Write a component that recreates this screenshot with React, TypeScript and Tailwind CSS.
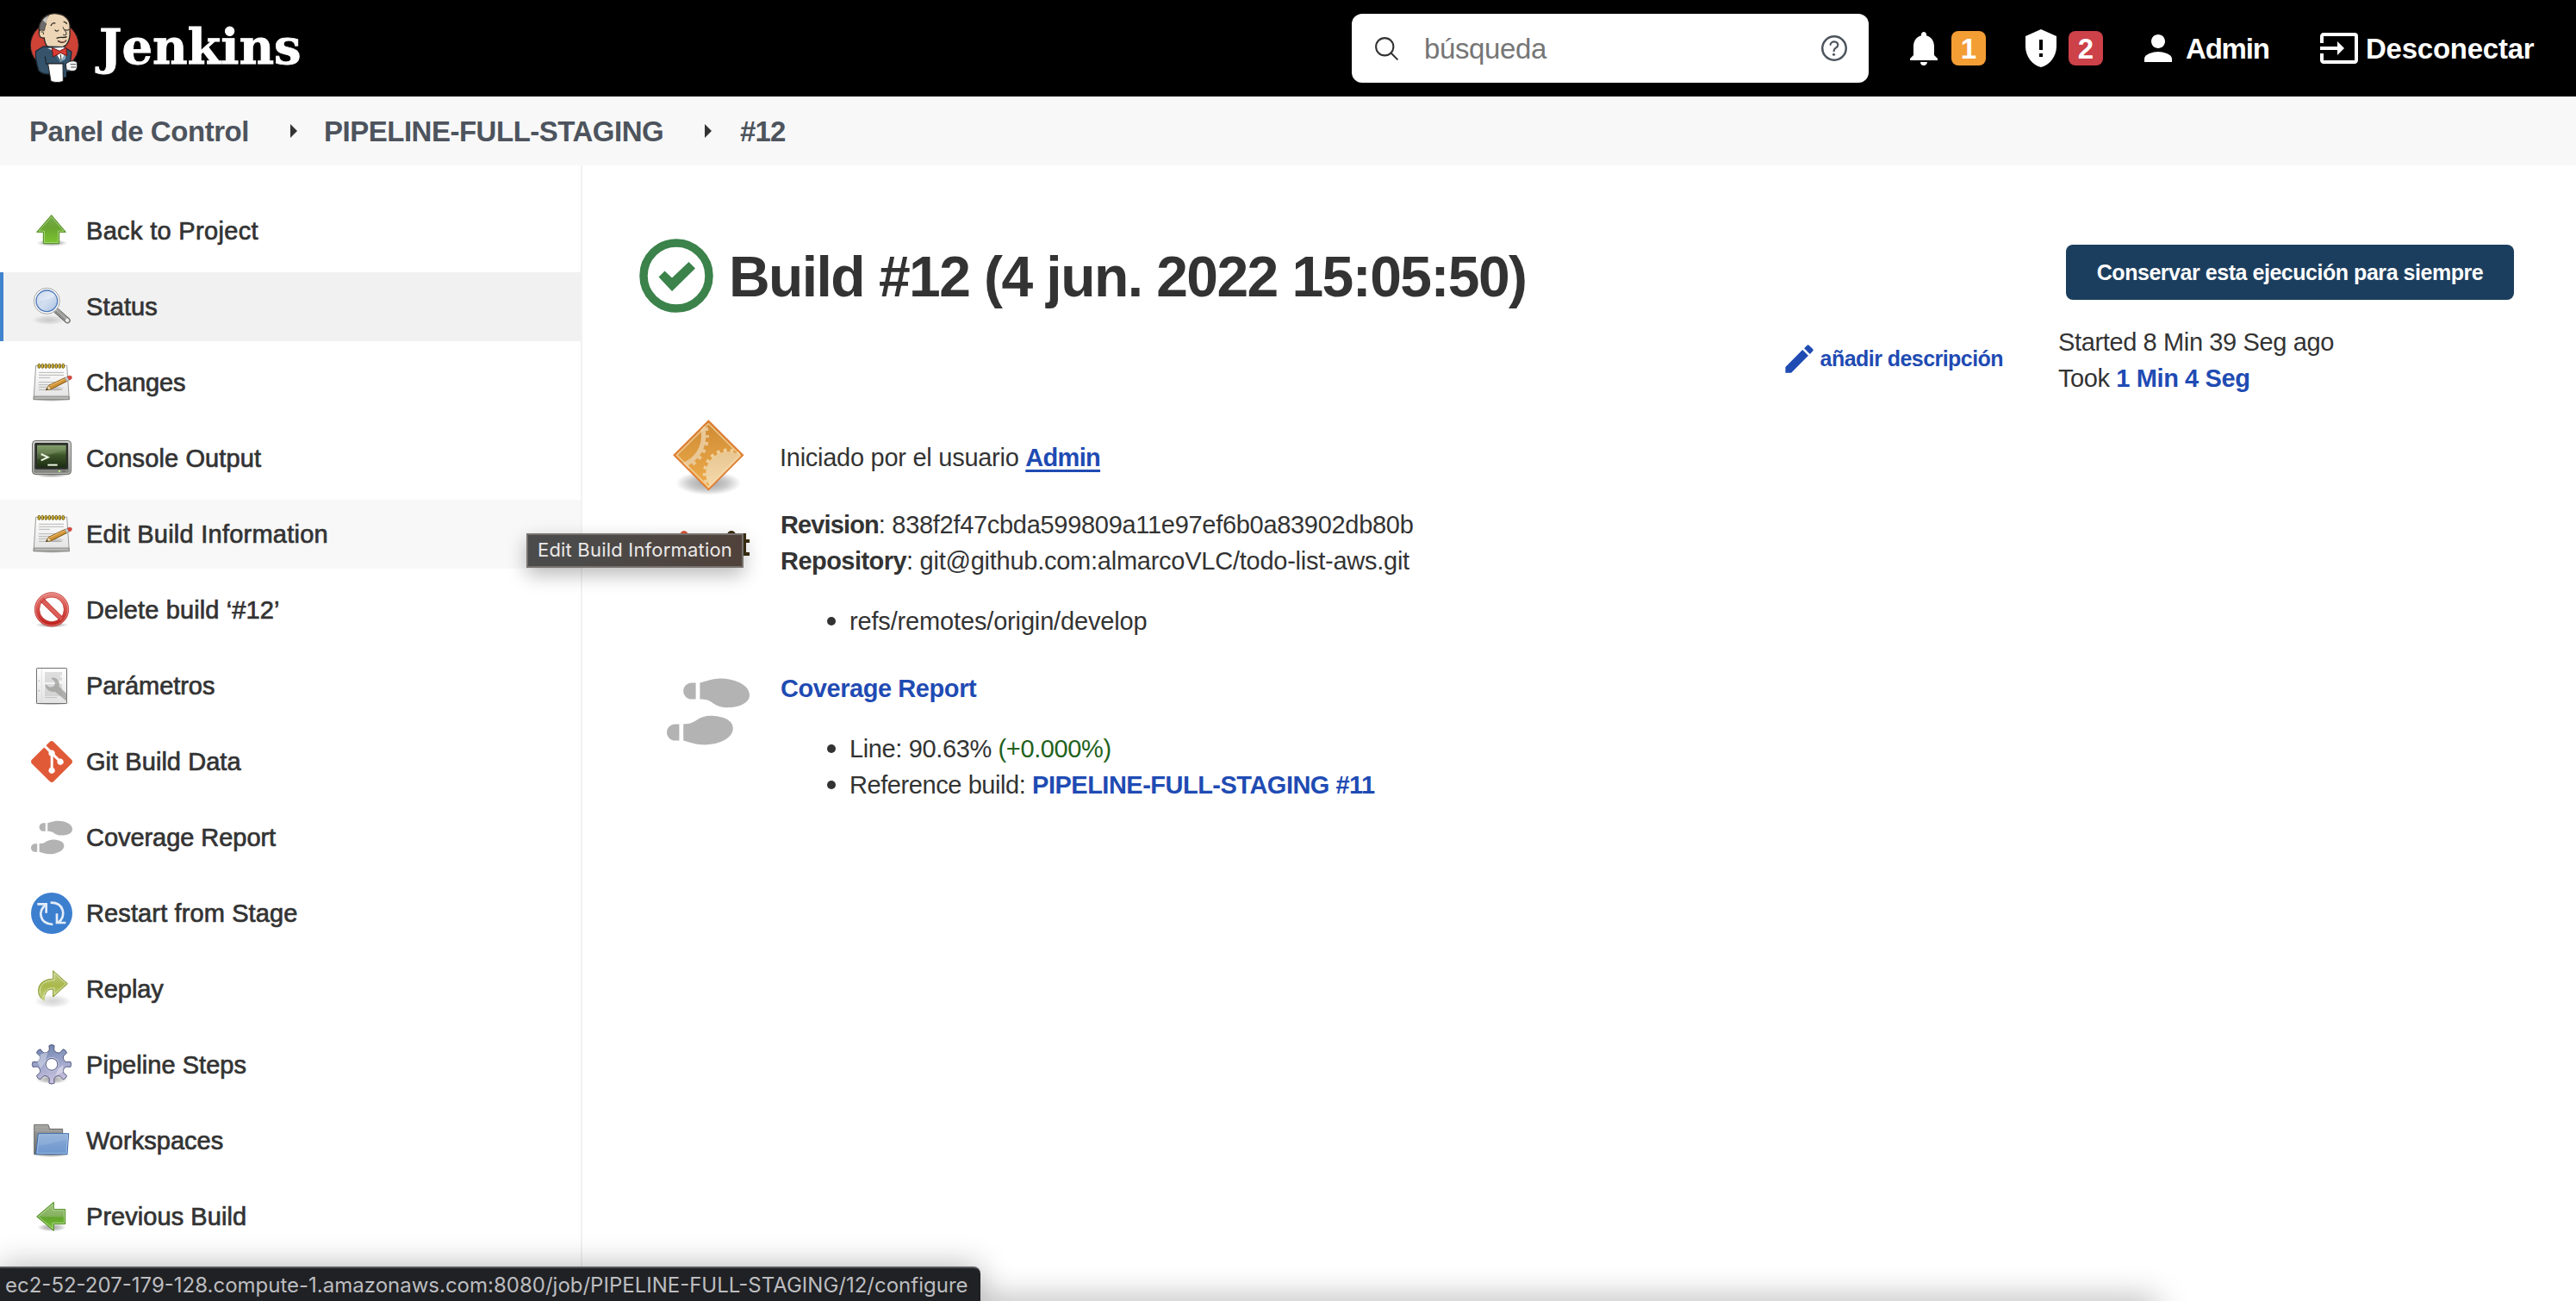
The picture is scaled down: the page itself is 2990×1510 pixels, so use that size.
import React from "react";
import { FaShoePrints } from "react-icons/fa";
import { SiGit } from "react-icons/si";
import { MdNotifications, MdPerson, MdInput, MdEdit } from "react-icons/md";
import { IoSearchOutline, IoHelpCircleOutline } from "react-icons/io5";

const iconClass = "h-12 w-12 shrink-0 overflow-visible";

function Gradients() {
  return (
    <svg className="absolute h-0 w-0" aria-hidden="true">
      <defs>
        <radialGradient id="shadow">
          <stop offset="0" stopColor="#000" stopOpacity="0.38" />
          <stop offset="0.6" stopColor="#000" stopOpacity="0.2" />
          <stop offset="1" stopColor="#000" stopOpacity="0" />
        </radialGradient>
        <linearGradient id="green" x1="0" y1="0" x2="0" y2="1">
          <stop offset="0" stopColor="#76a94c" />
          <stop offset="0.45" stopColor="#6aa532" />
          <stop offset="1" stopColor="#7cc52f" />
        </linearGradient>
        <linearGradient id="greenLeft" x1="0" y1="0" x2="0" y2="1">
          <stop offset="0" stopColor="#9cc080" />
          <stop offset="0.48" stopColor="#86b25f" />
          <stop offset="0.55" stopColor="#62a52c" />
          <stop offset="1" stopColor="#7cc53a" />
        </linearGradient>
        <linearGradient id="olive" x1="0" y1="0" x2="0" y2="1">
          <stop offset="0" stopColor="#c3cc85" />
          <stop offset="0.5" stopColor="#a9b84a" />
          <stop offset="1" stopColor="#c9d68a" />
        </linearGradient>
        <linearGradient id="lens" x1="0" y1="0" x2="1" y2="1">
          <stop offset="0" stopColor="#b5c9e6" />
          <stop offset="0.5" stopColor="#d3dff0" />
          <stop offset="1" stopColor="#a9c1e2" />
        </linearGradient>
        <linearGradient id="paper" x1="0" y1="0" x2="0" y2="1">
          <stop offset="0" stopColor="#ffffff" />
          <stop offset="1" stopColor="#e2e2e2" />
        </linearGradient>
        <linearGradient id="bezel" x1="0" y1="0" x2="0" y2="1">
          <stop offset="0" stopColor="#c8c9c4" />
          <stop offset="1" stopColor="#7d7f7b" />
        </linearGradient>
        <linearGradient id="screen" x1="0" y1="0" x2="0" y2="1">
          <stop offset="0" stopColor="#6f8f52" />
          <stop offset="0.5" stopColor="#3b5228" />
          <stop offset="1" stopColor="#1c2c12" />
        </linearGradient>
        <linearGradient id="stop" x1="0" y1="0" x2="0" y2="1">
          <stop offset="0" stopColor="#e57f79" />
          <stop offset="0.45" stopColor="#d9534d" />
          <stop offset="1" stopColor="#c0241f" />
        </linearGradient>
        <linearGradient id="steel" x1="0.3" y1="0" x2="0.5" y2="1">
          <stop offset="0" stopColor="#6e83ad" />
          <stop offset="0.45" stopColor="#9aa3c9" />
          <stop offset="1" stopColor="#cfc4e0" />
        </linearGradient>
        <linearGradient id="folder" x1="0" y1="0" x2="0" y2="1">
          <stop offset="0" stopColor="#8badd8" />
          <stop offset="1" stopColor="#6e97ce" />
        </linearGradient>
        <linearGradient id="folderBack" x1="0" y1="0" x2="0" y2="1">
          <stop offset="0" stopColor="#a0a09e" />
          <stop offset="1" stopColor="#6b6b69" />
        </linearGradient>
        <linearGradient id="amber" x1="0" y1="0" x2="0" y2="1">
          <stop offset="0" stopColor="#cf8a33" />
          <stop offset="1" stopColor="#efae4c" />
        </linearGradient>
        <linearGradient id="cream" x1="0" y1="0" x2="0" y2="1">
          <stop offset="0" stopColor="#e8c692" />
          <stop offset="1" stopColor="#f7deb0" />
        </linearGradient>
      </defs>
    </svg>
  );
}

function ArrowUpIcon() {
  return (
    <svg viewBox="0 0 144 144" className={iconClass}>
      <ellipse cx="73" cy="114" rx="54" ry="12" fill="url(#shadow)" />
      <path d="M71 17 L121 76 H98 V116 H43 V76 H20 Z" fill="url(#green)" stroke="#4e8a1d" strokeWidth="3" />
      <path d="M71 23 L114 72.500 H94.500 V112.500 H46.500 V72.500 H27 Z" fill="none" stroke="#a9d884" strokeWidth="2.500" />
    </svg>
  );
}

function ArrowLeftIcon() {
  return (
    <svg viewBox="0 0 144 144" className={iconClass}>
      <ellipse cx="72" cy="110" rx="50" ry="14" fill="url(#shadow)" />
      <path d="M20 72 L79 22 V47 H119 V98 H79 V121 Z" fill="url(#greenLeft)" stroke="#4e8a1d" strokeWidth="3" />
      <path d="M26 72 L75.500 30 V50.500 H115.500 V94.500 H75.500 V114 Z" fill="none" stroke="#b5dc94" strokeWidth="2.500" />
    </svg>
  );
}

function ReplayIcon() {
  return (
    <svg viewBox="0 0 144 144" className={iconClass}>
      <ellipse cx="75" cy="114" rx="64" ry="24" fill="url(#shadow)" opacity="0.45" />
      <path
        d="M77 8 L127 53 L77 99 V72 C58 72 47 82 48 114 C34 108 25 94 26 74 C28 50 48 37 77 37 Z"
        fill="url(#olive)"
      />
      <path
        d="M36 104 C28 96 25 86 26 74 C28 50 48 37 77 37 V8 L127 53 L77 99 V72 C62 72 52 78 49 92"
        fill="none"
        stroke="#8a9a35"
        strokeWidth="3"
      />
      <path d="M31 86 C28 56 50 41 81 41 V16 L121 53 L81 90 V68 C60 67 47 76 44 100" fill="none" stroke="#e1e8bd" strokeWidth="2.500" />
    </svg>
  );
}

function MagnifierIcon() {
  return (
    <svg viewBox="0 0 144 144" className={iconClass}>
      <ellipse cx="62" cy="118" rx="58" ry="17" fill="url(#shadow)" opacity="0.45" />
      <path d="M89 86 L127 120" stroke="#555753" strokeWidth="20" strokeLinecap="round" />
      <path d="M89 86 L127 120" stroke="#b4b5b2" strokeWidth="15" strokeLinecap="round" />
      <path d="M86 88 L120 119" stroke="#7d7f7c" strokeWidth="4" />
      <path d="M93 85 L122 111" stroke="#8c8e8a" strokeWidth="3" />
      <circle cx="126" cy="119" r="6" fill="#f2f2f1" />
      <circle cx="55" cy="52" r="45" fill="#fdfdfd" stroke="#8f918d" strokeWidth="2.500" />
      <circle cx="55" cy="52" r="37" fill="url(#lens)" stroke="#4a76b8" strokeWidth="4" />
      <path d="M22 62 C30 44 60 54 84 34 C76 12 34 14 22 38 Z" fill="#fff" opacity="0.3" />
    </svg>
  );
}

function NotepadIcon() {
  return (
    <svg viewBox="0 0 144 144" className={iconClass}>
      <ellipse cx="72" cy="131" rx="62" ry="7" fill="url(#shadow)" />
      <path d="M17 13 H125 L133 131 H9 Z" fill="url(#paper)" stroke="#888a85" strokeWidth="2.500" />
      <path d="M10 120 H132 L133 131 H9 Z" fill="#b8b9b6" stroke="#6e706c" strokeWidth="2" />
      <path d="M27 37 H114 M27 46 H114 M27 55 H66 M27 71 H87 M27 80 H80 M27 88 H64 M27 97 H108" stroke="#a8aaa6" strokeWidth="2.500" />
      {[28, 40, 52, 64, 76, 88, 100, 112].map((x) => (
        <rect key={x} x={x - 3.5} y="7" width="7" height="15" rx="3.500" fill="#e6c93e" stroke="#6b570f" strokeWidth="3" />
      ))}
      <ellipse cx="84" cy="92" rx="34" ry="9" fill="url(#shadow)" opacity="0.5" />
      <path d="M52 98 L62 82 L119 55 L126 67 L70 95 Z" fill="#cf9236" stroke="#7d5510" strokeWidth="3" strokeLinejoin="round" />
      <path d="M64 84 L120 58" stroke="#e9b968" strokeWidth="4" />
      <path d="M52 98 L62 82 L70 95 Z" fill="#f3dcb4" stroke="#7d5510" strokeWidth="1.500" />
      <path d="M52 98 L56 91.500 L60 96 Z" fill="#2c2c2c" />
      <path d="M117 56 L128 51 L134 63 L124 68 Z" fill="#c7c8c5" stroke="#7c7e7a" strokeWidth="1.500" />
      <path d="M127 51 C134 47 142 48 142 54 C142 60 138 62 133 63 Z" fill="#e2453b" stroke="#9d2a22" strokeWidth="1.500" />
    </svg>
  );
}

function TerminalIcon() {
  return (
    <svg viewBox="0 0 144 144" className={iconClass}>
      <ellipse cx="72" cy="130" rx="60" ry="9" fill="url(#shadow)" />
      <rect x="4.500" y="10.500" width="135" height="117" rx="11" fill="url(#bezel)" stroke="#6b6d69" strokeWidth="3" />
      <rect x="8" y="14" width="128" height="110" rx="8" fill="none" stroke="#dedfdc" strokeWidth="2" />
      <rect x="13" y="18" width="116" height="92" rx="4" fill="#2b2d2a" />
      <rect x="21" y="26" width="101" height="77" fill="url(#screen)" />
      <path d="M21 32 H122 M21 39 H122 M21 46 H122 M21 53 H122" stroke="#8aa670" strokeWidth="1.500" opacity="0.6" />
      <path d="M21 74 C60 74 60 50 122 46 V26 H21 Z" fill="#fff" opacity="0.12" />
      <path d="M35 57 L59 68 L35 79" fill="none" stroke="#eaf5e0" strokeWidth="6" />
      <path d="M58 95 H92" stroke="#eaf5e0" strokeWidth="6" />
      <circle cx="99" cy="117" r="3.500" fill="#b6f07a" />
      <path d="M108 117 H120" stroke="#6b6d69" strokeWidth="5" />
    </svg>
  );
}

function NoEntryIcon() {
  return (
    <svg viewBox="0 0 144 144" className={iconClass}>
      <ellipse cx="72" cy="124" rx="58" ry="9" fill="url(#shadow)" />
      <circle cx="72" cy="70" r="51" fill="none" stroke="url(#stop)" strokeWidth="17" />
      <path d="M37 35 L107 104" stroke="#b92a24" strokeWidth="17" />
      <path d="M37 35 L107 104" stroke="#dc5f59" strokeWidth="13" />
      <circle cx="72" cy="70" r="59" fill="none" stroke="#b5302a" strokeWidth="2" />
      <circle cx="72" cy="70" r="56" fill="none" stroke="#f0aaa6" strokeWidth="2" />
      <circle cx="72" cy="70" r="43" fill="none" stroke="#b5302a" strokeWidth="2" />
    </svg>
  );
}

function ParametersIcon() {
  return (
    <svg viewBox="0 0 144 144" className={iconClass}>
      <ellipse cx="72" cy="132" rx="64" ry="8" fill="url(#shadow)" />
      <rect x="19.500" y="10.500" width="105" height="123" rx="2" fill="url(#paper)" stroke="#6f716d" strokeWidth="3" />
      <path d="M37 12 V132" stroke="#dadada" strokeWidth="2" />
      <path
        d="M48 27 H108 M48 33 H108 M48 39 H102 M48 45 H108 M48 51 H108 M48 57 H84 M48 69 H108 M48 75 H108 M48 81 H108 M48 87 H104 M48 93 H108 M48 99 H108 M48 105 H108 M48 113 H90"
        stroke="#b5b6b4"
        strokeWidth="2.500"
      />
      <path
        d="M72 44 C90 42 102 56 98 74 L124 100 V126 L84 92 C68 96 52 86 50 70 L54 68 C60 78 74 80 82 70 C86 60 82 52 72 49 Z"
        fill="#9b9c9a"
        opacity="0.75"
      />
      <circle cx="28" cy="55" r="2.500" fill="#bbb" />
      <circle cx="28" cy="89" r="2.500" fill="#bbb" />
    </svg>
  );
}

function RestartIcon() {
  return (
    <svg viewBox="0 0 144 144" className={iconClass}>
      <circle cx="72" cy="72" r="72" fill="#3d7fcf" />
      <g fill="none" stroke="#e3edf9" strokeWidth="8">
        <path d="M22 40 H53 V71" />
        <path d="M52 42 C24 60 26 108 76 111" />
        <path d="M68 35 C116 34 124 84 95 104" />
        <path d="M90 73 V105 H121" />
      </g>
    </svg>
  );
}

const gearPath = (() => {
  const parts: string[] = [];
  const point = (r: number, deg: number) => {
    const a = (deg * Math.PI) / 180;
    return `${(72 + r * Math.cos(a)).toFixed(1)} ${(70 + r * Math.sin(a)).toFixed(1)}`;
  };
  for (let i = 0; i < 8; i++) {
    const c = i * 45;
    parts.push(
      `${i ? "L" : "M"}${point(47, c - 13)}`,
      `L${point(52, c - 9)}`,
      `L${point(66, c - 8)}`,
      `Q${point(71, c)} ${point(66, c + 8)}`,
      `L${point(52, c + 9)}`,
      `L${point(47, c + 13)}`,
      `Q${point(43, c + 22.5)} ${point(47, c + 32)}`
    );
  }
  return parts.join(" ") + "Z";
})();

function GearIcon() {
  return (
    <svg viewBox="0 0 144 144" className={iconClass}>
      <ellipse cx="72" cy="122" rx="56" ry="16" fill="url(#shadow)" />
      <path d={gearPath} fill="url(#steel)" stroke="#525a7e" strokeWidth="3" strokeLinejoin="round" />
      <path d="M20 56 C34 30 44 30 58 28 L50 60 L34 84 Z" fill="#dfe3f0" opacity="0.5" />
      <path d="M96 84 L112 72 L112 96 L84 110 Z" fill="#f1eef7" opacity="0.5" />
      <circle cx="72" cy="70" r="24" fill="none" stroke="#c4c8e0" strokeWidth="3" />
      <circle cx="72" cy="70" r="20.500" fill="#fff" stroke="#525a7e" strokeWidth="3" />
    </svg>
  );
}

function FolderIcon() {
  return (
    <svg viewBox="0 0 144 144" className={iconClass}>
      <ellipse cx="70" cy="121" rx="66" ry="8" fill="url(#shadow)" />
      <path d="M11 16 H60 L65 31 H110 V119 H11 Z" fill="url(#folderBack)" stroke="#5c5c5a" strokeWidth="2.500" />
      <path d="M13 20 H58 M13 26 H60 M13 32 H62 M13 38 H108" stroke="#bdbdbb" strokeWidth="1.500" />
      <path d="M25 47 H131 L126 119 H17 Z" fill="url(#folder)" stroke="#3f6dac" strokeWidth="3" />
      <path d="M28 50.500 H127.500 L123 115.500 H21 Z" fill="none" stroke="#b2cae9" strokeWidth="2" />
      <path d="M27 88 C70 88 80 72 127 70 L128 52 H29 Z" fill="#fff" opacity="0.1" />
    </svg>
  );
}

function GitIcon() {
  return <SiGit className="h-12 w-12 shrink-0 text-[#e05a38]" />;
}

function CoverageIcon() {
  return <FaShoePrints className="h-auto w-12 shrink-0 text-[#b3b3b3]" />;
}

function UserCauseIcon() {
  return (
    <svg viewBox="0 0 288 288" className="h-24 w-24 shrink-0">
      <ellipse cx="145" cy="242" rx="114" ry="42" fill="url(#shadow)" />
      <clipPath id="diamondClip">
        <path d="M145 30 L260 145 L145 260 L30 145 Z" />
      </clipPath>
      <path d="M145 25 L265 145 L145 265 L25 145 Z" fill="url(#amber)" stroke="#e07c35" strokeWidth="5" />
      <g clipPath="url(#diamondClip)">
        <circle cx="20" cy="78" r="108" fill="none" stroke="#e9c796" strokeWidth="16" />
        <circle cx="20" cy="78" r="120" fill="none" stroke="#e9c796" strokeWidth="14" strokeDasharray="12 15" strokeDashoffset="6" />
        <circle cx="212" cy="208" r="76" fill="url(#cream)" />
        <circle cx="212" cy="208" r="80" fill="none" stroke="#efcf9b" strokeWidth="13" strokeDasharray="11 13" />
      </g>
      <path d="M145 35 L255 145 L145 255 L35 145 Z" fill="none" stroke="#f6d9ae" strokeWidth="4" opacity="0.8" />
    </svg>
  );
}

function SuccessIcon() {
  return (
    <svg viewBox="0 0 86 86" className="h-[86px] w-[86px] shrink-0">
      <circle cx="43" cy="43" r="38" fill="none" stroke="#3b824b" strokeWidth="9.500" />
      <path d="M22.500 44.500 L29.500 37.500 L38 45.500 L57.500 27 L65 34.500 L38 61 Z" fill="#3b824b" />
    </svg>
  );
}

function ButlerLogo() {
  return (
    <svg viewBox="40 42 180 252" className="h-[84px] w-[60px] shrink-0">
      <ellipse cx="131" cy="158" rx="84" ry="82" fill="#cf4236" stroke="#222" strokeWidth="3" />
      <path d="M84 76 C90 54 120 44 142 48 C176 52 188 78 184 104 C186 124 184 142 172 156 C156 170 124 176 110 166 C98 156 96 144 95 132 C80 134 74 122 78 108 C74 96 78 84 84 76 Z" fill="#ecd6b5" stroke="#2a2522" strokeWidth="4" />
      <path d="M79 108 C74 82 90 60 112 54 C100 66 98 78 102 84 C96 92 98 104 94 108 C88 104 82 104 79 108 Z" fill="#6d6b6c" stroke="#2a2522" strokeWidth="2" />
      <path d="M90 70 C96 62 104 58 112 54 C104 62 101 72 101 82 Z" fill="#c9c7c6" />
      <path d="M84 112 C88 108 94 112 92 120" fill="none" stroke="#2a2522" strokeWidth="3" />
      <path d="M118 90 C122 80 128 78 134 82 M162 76 C168 76 172 78 174 84" fill="none" stroke="#2a2522" strokeWidth="3.500" />
      <path d="M132 104 C136 110 142 110 145 104 M168 102 C172 108 178 106 180 102" fill="none" stroke="#2a2522" strokeWidth="3.500" />
      <path d="M160 94 C164 106 174 112 172 120 C168 124 162 122 160 120" fill="none" stroke="#2a2522" strokeWidth="3" />
      <path d="M138 134 C150 126 160 134 174 128 M142 142 C154 150 166 150 172 140" fill="none" stroke="#2a2522" strokeWidth="4" />
      <path d="M144 141 C154 146 164 145 171 140 C166 150 152 150 144 141 Z" fill="#b0604f" />
      <path d="M92 162 L66 178 C62 200 70 226 76 246 C86 256 100 258 108 258 L182 248 L190 180 L164 164 Z" fill="#35536b" stroke="#1d2a36" strokeWidth="4" />
      <path d="M106 168 L130 178 L154 214 L172 178 L164 164 Z" fill="#f3f3f3" />
      <path d="M128 186 L150 214 L172 186 L168 206 L150 216 Z" fill="#8ab0c8" />
      <path d="M152 190 L154 210" stroke="#333" strokeWidth="3" />
      <path d="M122 166 L148 178 L172 166 L174 194 L152 184 L126 198 Z" fill="#dd3b33" stroke="#6b1713" strokeWidth="3" />
      <path d="M98 196 L102 222 L164 222" fill="none" stroke="#1d2a36" strokeWidth="4" />
      <path d="M108 222 L160 222 L161 282 C150 288 130 288 118 282 Z" fill="#ffffff" stroke="#222" strokeWidth="3" />
      <path d="M162 222 L172 220 L172 268 L162 270 Z" fill="#2f4b61" />
      <path d="M170 224 C176 214 196 208 208 216 C212 228 210 242 202 246 C190 250 176 244 172 242 Z" fill="#f4f4f4" stroke="#222" strokeWidth="3" />
      <path d="M186 224 H206 M188 234 H206" stroke="#555" strokeWidth="3" />
    </svg>
  );
}

const ShieldAlert = () => (
  <svg viewBox="0 0 24 24" className="h-12 w-12 shrink-0" fill="#fff">
    <path d="M12,1L3,5V11C3,16.55 6.84,21.74 12,23C17.16,21.74 21,16.55 21,11V5L12,1M11,7H13V13H11V7M11,15H13V17H11V15Z" />
  </svg>
);

type Task = { label: string; icon: () => React.ReactElement; state?: "active" | "hover"; spacing?: string };

const tasks: Task[] = [
  { label: "Back to Project", icon: ArrowUpIcon, spacing: "tracking-[0.32px]" },
  { label: "Status", icon: MagnifierIcon, state: "active" },
  { label: "Changes", icon: NotepadIcon, spacing: "tracking-[-0.1px]" },
  { label: "Console Output", icon: TerminalIcon },
  { label: "Edit Build Information", icon: NotepadIcon, state: "hover", spacing: "tracking-[0.24px]" },
  { label: "Delete build ‘#12’", icon: NoEntryIcon },
  { label: "Parámetros", icon: ParametersIcon, spacing: "tracking-[-0.05px]" },
  { label: "Git Build Data", icon: GitIcon, spacing: "tracking-[0.05px]" },
  { label: "Coverage Report", icon: CoverageIcon, spacing: "tracking-[-0.05px]" },
  { label: "Restart from Stage", icon: RestartIcon },
  { label: "Replay", icon: ReplayIcon, spacing: "tracking-[-0.1px]" },
  { label: "Pipeline Steps", icon: GearIcon, spacing: "tracking-[0.05px]" },
  { label: "Workspaces", icon: FolderIcon, spacing: "tracking-[0.02px]" },
  { label: "Previous Build", icon: ArrowLeftIcon, spacing: "tracking-[0.05px]" },
];

function Header() {
  return (
    <header className="flex h-28 shrink-0 items-center bg-black text-[33px] font-bold text-white">
      <a className="ml-[33px] flex items-center">
        <ButlerLogo />
        <span className="ml-[22px] -mt-[5px] font-['DejaVu_Serif',serif] text-[56px] leading-[84px] tracking-[-0.1px] [-webkit-text-stroke:0.8px_#fff]">
          Jenkins
        </span>
      </a>
      <div className="ml-auto flex h-20 w-[600px] items-center rounded-xl bg-white">
        <IoSearchOutline className="ml-6 h-[33px] w-[33px] text-[#333]" />
        <span className="ml-[27px] pt-0.5 font-normal tracking-[-0.37px] text-[#767676]">búsqueda</span>
        <IoHelpCircleOutline className="ml-auto mr-5 h-10 w-10 text-[#4d545d]" />
      </div>
      <div className="ml-10 flex w-24 items-center gap-2">
        <MdNotifications className="h-12 w-12" />
        <span className="flex h-10 w-10 shrink-0 items-center justify-center rounded-lg bg-[#f39d35] pt-px">1</span>
      </div>
      <div className="ml-10 flex w-24 items-center gap-2">
        <ShieldAlert />
        <span className="flex h-10 w-10 shrink-0 items-center justify-center rounded-lg bg-[#cd4149] pt-px">2</span>
      </div>
      <div className="ml-10 flex items-center">
        <MdPerson className="h-12 w-12" />
        <span className="ml-2 w-[98px] pt-0.5 tracking-[-1.2px]">Admin</span>
      </div>
      <div className="ml-14 mr-[46px] flex items-center">
        <MdInput className="h-12 w-12" />
        <span className="ml-[7px] w-[198px] pt-0.5 tracking-[-0.25px]">Desconectar</span>
      </div>
    </header>
  );
}

function Breadcrumbs() {
  const arrow = <span className="h-4 w-2 bg-[#333] [clip-path:polygon(0_0,100%_50%,0_100%)]" />;
  return (
    <nav className="flex h-20 shrink-0 items-center bg-[#f8f8f8] text-[33px] font-bold text-[#4d545d]">
      <span className="ml-[34px] w-[303px] pt-0.5 tracking-[-0.45px]">Panel de Control</span>
      {arrow}
      <span className="ml-[31px] w-[442px] pt-0.5 tracking-[-0.49px]">PIPELINE-FULL-STAGING</span>
      {arrow}
      <span className="ml-[33px] pt-0.5 tracking-[-0.9px]">#12</span>
    </nav>
  );
}

function SidePanel() {
  return (
    <aside className="flex w-[676px] shrink-0 flex-col gap-2 border-r-2 border-[#f2f2f2] pt-9">
      {tasks.map(({ label, icon: Icon, state, spacing }) => (
        <a
          key={label}
          className={`flex h-20 shrink-0 items-center border-l-4 pl-8 text-[29px] text-[#333] [-webkit-text-stroke:0.7px_#333] ${
            state === "active" ? "border-[#4084ce] bg-[#f1f1f1]" : state === "hover" ? "border-[#f8f8f8] bg-[#f8f8f8]" : "border-transparent"
          }`}
        >
          <Icon />
          <span className={`ml-4 whitespace-pre pt-0.5 ${spacing ?? "tracking-[0.12px]"}`}>{label}</span>
        </a>
      ))}
    </aside>
  );
}

function Main() {
  return (
    <main className="flex grow flex-col text-[29px] leading-[42px] text-[#333]">
      <div className="flex h-[288px] pt-[76px]">
        <div className="ml-[66px] mt-[9px] flex h-[86px] items-center">
          <SuccessIcon />
          <h1 className="ml-[18px] mt-0.5 whitespace-nowrap text-[66px] font-bold leading-[86px] tracking-[-1.57px]">
            Build #12 (4 jun. 2022 15:05:50)
          </h1>
        </div>
        <a className="ml-auto mt-[126px] mr-[65px] flex h-11 items-center text-[25px] font-bold tracking-[-0.55px] text-[#1f4bb3]">
          <MdEdit className="h-[43px] w-[43px]" />
          <span className="ml-[3px] whitespace-nowrap">añadir descripción</span>
        </a>
        <div className="mr-[72px] flex w-[528px] flex-col">
          <button className="ml-2 mt-4 flex h-16 w-[520px] items-center justify-center whitespace-nowrap rounded-lg bg-[#1c3e5e] text-[25px] font-bold tracking-[-0.46px] text-white">
            Conservar esta ejecución para siempre
          </button>
          <div className="-ml-px mt-7 tracking-[-0.37px]">Started 8 Min 39 Seg ago</div>
          <div className="-ml-px tracking-[-0.4px]">
            Took <b className="text-[#1f4bb3]">1 Min 4 Seg</b>
          </div>
        </div>
      </div>

      <section className="ml-[98px] flex">
        <UserCauseIcon />
        <p className="ml-[35px] pt-[30px] tracking-[-0.27px]">
          Iniciado por el usuario{" "}
          <b className="tracking-[-0.7px] text-[#1f4bb3] underline decoration-[3px] underline-offset-[4px]">Admin</b>
        </p>
      </section>

      <section className="ml-[98px] mt-3 flex">
        <svg viewBox="0 0 96 96" className="h-24 w-24 shrink-0">
          <path d="M15 34 a5 6 0 0 1 10 0 Z" fill="#e0533c" />
          <circle cx="75" cy="33" r="5" fill="#3b2f12" />
          <path d="M90 31 V54 M88 40 H96 M88 55 H96" stroke="#3b2f12" strokeWidth="4" fill="none" />
        </svg>
        <div className="ml-9">
          <p className="tracking-[-0.3px]">
            <b className="tracking-[-0.88px]">Revision</b>: 838f2f47cbda599809a11e97ef6b0a83902db80b
          </p>
          <p className="tracking-[-0.25px]">
            <b className="tracking-[-0.55px]">Repository</b>: git@github.com:almarcoVLC/todo-list-aws.git
          </p>
          <ul className="mt-7">
            <li className="flex items-center tracking-[-0.16px]">
              <i className="ml-[54px] mr-[16px] h-2.5 w-2.5 rounded-full bg-[#333]" />
              refs/remotes/origin/develop
            </li>
          </ul>
        </div>
      </section>

      <section className="ml-[98px] mt-9 flex">
        <FaShoePrints className="h-auto w-24 shrink-0 self-start text-[#b3b3b3]" />
        <div className="ml-9">
          <b className="block tracking-[-0.43px] text-[#1f4bb3]">Coverage Report</b>
          <ul className="mt-7">
            <li className="flex items-center whitespace-pre tracking-[-0.37px]">
              <i className="ml-[54px] mr-[16px] h-2.5 w-2.5 rounded-full bg-[#333]" />
              Line: 90.63% <span className="text-[#22611c]">(+0.000%)</span>
            </li>
            <li className="flex items-center whitespace-pre tracking-[-0.42px]">
              <i className="ml-[54px] mr-[16px] h-2.5 w-2.5 rounded-full bg-[#333]" />
              Reference build: <b className="tracking-[-0.51px] text-[#1f4bb3]">PIPELINE-FULL-STAGING #11</b>
            </li>
          </ul>
        </div>
      </section>
    </main>
  );
}

export default function App() {
  return (
    <div className="relative flex h-[1510px] w-[2990px] flex-col overflow-hidden bg-white font-['Liberation_Sans',Arial,sans-serif]">
      <Gradients />
      <Header />
      <Breadcrumbs />
      <div className="flex grow">
        <SidePanel />
        <Main />
      </div>
      <div className="absolute left-[611px] top-[619px] flex h-10 w-[252px] items-center justify-center whitespace-nowrap border-2 border-[#77716e] bg-linear-to-r from-[#4b4b4b] from-20% to-[#50423b] pb-0.5 font-[Inter,sans-serif] text-[22px] tracking-[0.2px] text-[#ebe9e8] shadow-[0_8px_22px_rgba(0,0,0,0.28)]">
        Edit Build Information
      </div>
      <div className="absolute -bottom-5 left-0 h-4 w-[2500px] rounded-full shadow-[0_0_36px_8px_rgba(0,0,0,0.28)]" />
      <div className="absolute bottom-0 left-0 flex h-10 w-[1138px] items-center whitespace-nowrap rounded-tr-lg border-t-2 border-[#55565a] bg-[#202124] pl-[6px] pt-px font-[Inter,sans-serif] text-[24px] text-[#bcbdc0] shadow-[0_0_36px_rgba(0,0,0,0.3)]">
        ec2-52-207-179-128.compute-1.amazonaws.com:8080/job/PIPELINE-FULL-STAGING/12/configure
      </div>
    </div>
  );
}
